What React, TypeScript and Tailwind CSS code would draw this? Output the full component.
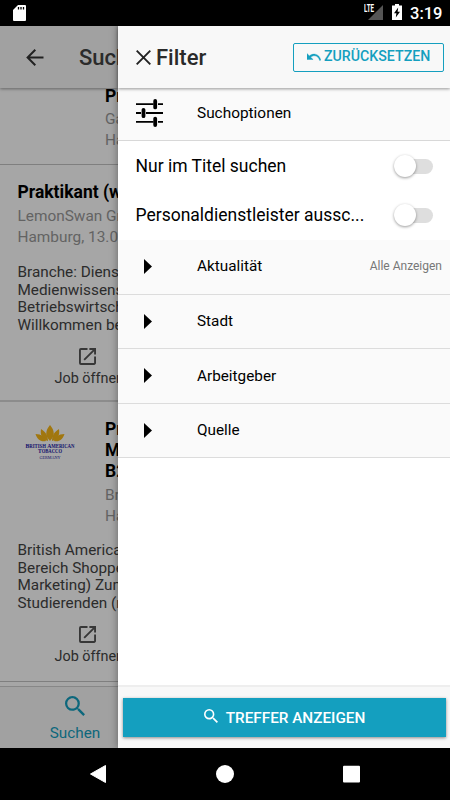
import React from "react";

const SearchIcon: React.FC<{ className?: string }> = ({ className }) => (
  <svg viewBox="3 3 17.5 17.5" className={className} fill="currentColor">
    <path d="M15.5 14h-.79l-.28-.27A6.471 6.471 0 0 0 16 9.5 6.5 6.5 0 1 0 9.5 16c1.61 0 3.09-.59 4.23-1.57l.27.28v.79l5 4.99L20.49 19l-4.99-5zm-6 0C7.01 14 5 11.99 5 9.5S7.01 5 9.5 5 14 7.01 14 9.5 11.99 14 9.5 14z" />
  </svg>
);

const StatusBar: React.FC = () => (
  <div className="flex h-[26px] shrink-0 items-center bg-black text-white">
    <svg viewBox="0 0 13 16" className="ml-[13px] h-4 w-[13px]">
      <path d="M5 0h7a1 1 0 0 1 1 1v14a1 1 0 0 1-1 1H1a1 1 0 0 1-1-1V5z" fill="#fff" />
      <path d="M5.5 2v2.6M8 2v2.6M10.5 2v2.6" stroke="#000" strokeWidth="1.3" />
    </svg>
    <div className="ml-auto flex items-start">
      <span className="mr-[1px] w-[11px] text-[10px] font-bold leading-[9px] [transform-origin:left] scale-x-[0.62]">
        LTE
      </span>
      <svg viewBox="0 0 15 15" className="-ml-[8px] mr-[9px] mt-[1px] h-[15px] w-[15px]">
        <path d="M15 0v15H0z" fill="#555" />
      </svg>
      <svg viewBox="0 0 10 16" className="mr-2 h-4 w-[10px]">
        <path d="M3 0h4v1.5h3V16H0V1.5h3z" fill="#fff" />
        <path d="M6.2 3.4 2 9.2h2.4L3.8 13.6 8 7.8H5.6z" fill="#000" />
      </svg>
      <span className="mr-[9px] w-[31px] whitespace-nowrap pt-px text-[16.5px] font-medium leading-[18px]">3:19</span>
    </div>
  </div>
);

const JobAction: React.FC = () => (
  <div className="w-[74px]">
    <svg viewBox="3 3 18 18" className="ml-[24px] h-[17px] w-[17px] text-[#555]" fill="currentColor">
      <path d="M19 19H5V5h7V3H5a2 2 0 0 0-2 2v14a2 2 0 0 0 2 2h14c1.1 0 2-.9 2-2v-7h-2v7zM14 3v2h3.59l-9.83 9.83 1.41 1.41L19 6.41V10h2V3h-7z" />
    </svg>
    <span className="mt-[5px] block whitespace-nowrap text-[14.4px] leading-[17px] text-[#444]">Job öffnen</span>
  </div>
);

const CompanyLogo: React.FC = () => (
  <svg viewBox="0 0 50 36" className="h-9 w-[50px]">
    <g fill="#f7b718">
      <path d="M25 0c5 6 5 11 0 16-5-5-5-10 0-16z" />
      <path d="M16 4c5 3 7 7 7 12-6-2-8-6-7-12zM34 4c-5 3-7 7-7 12 6-2 8-6 7-12z" />
      <path d="M10.5 9c6 0 9.500 3 10.500 7-5 1-8.500-1-10.500-7zM39.500 9c-6 0-9.500 3-10.500 7 5 1 8.500-1 10.500-7z" />
    </g>
    <g fill="#1a1aa8" textAnchor="middle" fontFamily="Liberation Serif, serif" fontWeight="700">
      <text x="25" y="22.5" fontSize="5.2" textLength="49" lengthAdjust="spacingAndGlyphs">
        <tspan fontSize="6.2">B</tspan>RITISH <tspan fontSize="6.2">A</tspan>MERICAN
      </text>
      <text x="25" y="28" fontSize="5.2" textLength="24" lengthAdjust="spacingAndGlyphs">
        <tspan fontSize="6.2">T</tspan>OBACCO
      </text>
      <text x="25" y="33.5" fontSize="4.200" fontWeight="400" textLength="21" lengthAdjust="spacingAndGlyphs">
        GERMANY
      </text>
    </g>
  </svg>
);

const ResultList: React.FC = () => (
  <div className="flex-1 overflow-hidden bg-white">
    <article className="-mt-[2px] h-[79px] border-b border-[#c4c4c4] pl-[105px]">
      <h2 className="text-[17.5px] font-bold leading-[21px]">Praktikant</h2>
      <p className="mt-[2px] text-[15.4px] leading-[21px] text-[#999]">
        Galeria
        <br />
        Hamburg
      </p>
    </article>

    <article className="h-[237px] whitespace-nowrap border-b-2 border-[#d8d8d8] pl-[17.5px] pt-[17px]">
      <h2 className="text-[17.5px] font-bold leading-[21px]">Praktikant (w/m)</h2>
      <p className="mt-[3px] text-[15.4px] leading-[21px] text-[#999]">
        LemonSwan GmbH
        <br />
        Hamburg, 13.09.
      </p>
      <p className="mt-4 text-[15.3px] leading-[17.5px] text-[#444]">
        Branche: Dienstleistung
        <br />
        Medienwissenschaften
        <br />
        Betriebswirtschaft
        <br />
        Willkommen bei uns
      </p>
      <div className="mt-[14px] pl-[37px]">
        <JobAction />
      </div>
    </article>

    <article className="h-[280px] whitespace-nowrap border-b border-[#c4c4c4] pl-[17.5px] pt-[17px]">
      <div className="flex">
        <div className="w-[87.5px] shrink-0 pl-[7.5px] pt-[6px]">
          <CompanyLogo />
        </div>
        <div>
          <h2 className="text-[17.5px] font-bold leading-[21px]">
            Praktikant
            <br />
            Marketing
            <br />
            B2B
          </h2>
          <p className="mt-[3px] text-[15.4px] leading-[21px] text-[#999]">
            British
            <br />
            Hamburg
          </p>
        </div>
      </div>
      <p className="mt-[15px] text-[15.3px] leading-[17.5px] text-[#444]">
        British American
        <br />
        Bereich Shopper
        <br />
        Marketing) Zum
        <br />
        Studierenden (m/w)
      </p>
      <div className="mt-[14px] pl-[37px]">
        <JobAction />
      </div>
    </article>
  </div>
);

const SearchPage: React.FC = () => (
  <div className="relative flex w-[118px] shrink-0 flex-col overflow-hidden">
    <header className="z-10 flex h-[62px] shrink-0 items-center bg-[#f8f8f8] shadow-[0_1px_3px_rgba(0,0,0,0.4)]">
      <svg viewBox="0 0 18 17" className="ml-[26px] h-[17px] w-[18px] shrink-0" fill="none" stroke="#333" strokeWidth="2">
        <path d="M17.5 8.5H1.5M9.3 .8 1.6 8.5l7.7 7.7" />
      </svg>
      <h1 className="ml-[35px] text-[22px] font-medium text-[#424242]">Suche</h1>
    </header>
    <ResultList />
    <footer className="flex h-[62px] shrink-0 flex-col items-center border-t border-[#d0d0d0] bg-[#f8f8f8] pl-8 pt-[9px] text-[#149fbf]">
      <SearchIcon className="h-5 w-5" />
      <span className="mt-[8px] text-[15.3px] leading-[18px]">Suchen</span>
    </footer>
    <div className="absolute inset-0 z-20 bg-black/35" />
  </div>
);

const Toggle: React.FC = () => (
  <span className="relative mr-[17px] h-[15px] w-[39px] rounded-full bg-[#dedede]">
    <span className="absolute left-0 -top-[4px] h-[22px] w-[22px] rounded-full bg-white shadow-[0_1px_3px_rgba(0,0,0,0.4)]" />
  </span>
);

const filters = [
  { label: "Aktualität", note: "Alle Anzeigen" },
  { label: "Stadt" },
  { label: "Arbeitgeber" },
  { label: "Quelle" },
];

const FilterDrawer: React.FC = () => (
  <aside className="z-30 flex flex-1 flex-col bg-white shadow-[0_0_8px_rgba(0,0,0,0.4)]">
    <header className="z-10 flex h-[62px] shrink-0 items-center bg-[#f8f8f8] pl-[18px] pr-[6px] shadow-[0_1px_3px_rgba(0,0,0,0.4)]">
      <svg viewBox="0 0 15 15" className="h-[15px] w-[15px]" stroke="#222" strokeWidth="1.9">
        <path d="m.7.7 13.6 13.6M14.3.7.7 14.3" />
      </svg>
      <h1 className="ml-[5px] text-[22px] font-medium text-[#2a2a2a]">Filter</h1>
      <button className="ml-auto flex h-[29px] w-[151px] items-center rounded-[2px] border border-[#149fbf] pl-[13px] text-[#149fbf]">
        <svg viewBox="0 0 14 8" className="mr-[3px] h-2 w-[14px]" fill="currentColor" stroke="currentColor" strokeWidth=".4">
          <path d="M0 .5v6h6.1L3.7 4.2C5 3 6.5 2.5 8.1 2.8c2.3.4 3.8 2 4.6 4.7l1.1-.4C12.9 3.800 11 1.6 8.2 1.2 6.2.9 4.2 1.5 2.4 2.9z" />
        </svg>
        <span className="whitespace-nowrap text-[14.200px] font-medium">ZURÜCKSETZEN</span>
      </button>
    </header>

    <div className="flex h-[53px] items-center border-b border-[#d8d8d8] bg-[#fafafa] pl-[17.5px] pb-[2px]">
      <svg viewBox="0 0 28 28" className="h-7 w-7" stroke="#000">
        <path d="M0 5.2h17.5M22 5.2h5M0 14h5M10 14h17M0 22.8h17.5M22 22.8h5" strokeWidth="1.8" />
        <path d="M19.2 2v6.4M7.5 10.8v6.4M19.2 19.6V26" strokeWidth="3.8" strokeLinecap="round" />
      </svg>
      <span className="ml-[33.5px] pt-[2px] text-[15.4px]">Suchoptionen</span>
    </div>

    <div className="flex h-[50px] items-center justify-between pl-[17.5px]">
      <span className="text-[17.5px]">Nur im Titel suchen</span>
      <Toggle />
    </div>
    <div className="flex h-[49px] items-center justify-between pl-[17.5px]">
      <span className="text-[17.5px]">Personaldienstleister aussc...</span>
      <Toggle />
    </div>

    {filters.map(({ label, note }) => (
      <div key={label} className="flex h-[54.6px] items-center border-b border-[#dcdcdc] bg-[#fafafa] pl-[26px] pr-2">
        <svg viewBox="0 0 8 15" className="h-[15px] w-2">
          <path d="M0 0v15l8-7.5z" />
        </svg>
        <span className="ml-[45px] text-[15.3px]">{label}</span>
        {note && <span className="ml-auto pb-[2px] text-[12px] text-[#777]">{note}</span>}
      </div>
    ))}

    <footer className="mt-auto h-[63px] border-t-2 border-[#eee] bg-[#f8f8f8] px-1 pt-[11px]">
      <button className="ml-[1px] flex h-[39px] w-[323px] items-center justify-center bg-[#149fbf] text-white shadow-[0_1px_3px_rgba(0,0,0,0.45)]">
        <SearchIcon className="mb-[3px] mr-2 h-[14px] w-[14px]" />
        <span className="pt-px text-[15.3px] font-medium">TREFFER ANZEIGEN</span>
      </button>
    </footer>
  </aside>
);

export default function App() {
  return (
    <main className="flex h-[800px] w-[450px] flex-col overflow-hidden bg-black font-['Roboto',sans-serif] text-black">
      <StatusBar />
      <div className="flex h-[722px] overflow-hidden">
        <SearchPage />
        <FilterDrawer />
      </div>
      <nav className="flex h-[52px] items-center pl-[90px]">
        <svg viewBox="0 0 270 18" className="h-[18px] w-[270px]" fill="#fff">
          <path d="M15.5.5v17L.5 9z" stroke="#fff" strokeLinejoin="round" />
          <circle cx="135" cy="9" r="9" />
          <rect x="253" y=".8" width="17" height="16.6" rx="1" />
        </svg>
      </nav>
    </main>
  );
}
